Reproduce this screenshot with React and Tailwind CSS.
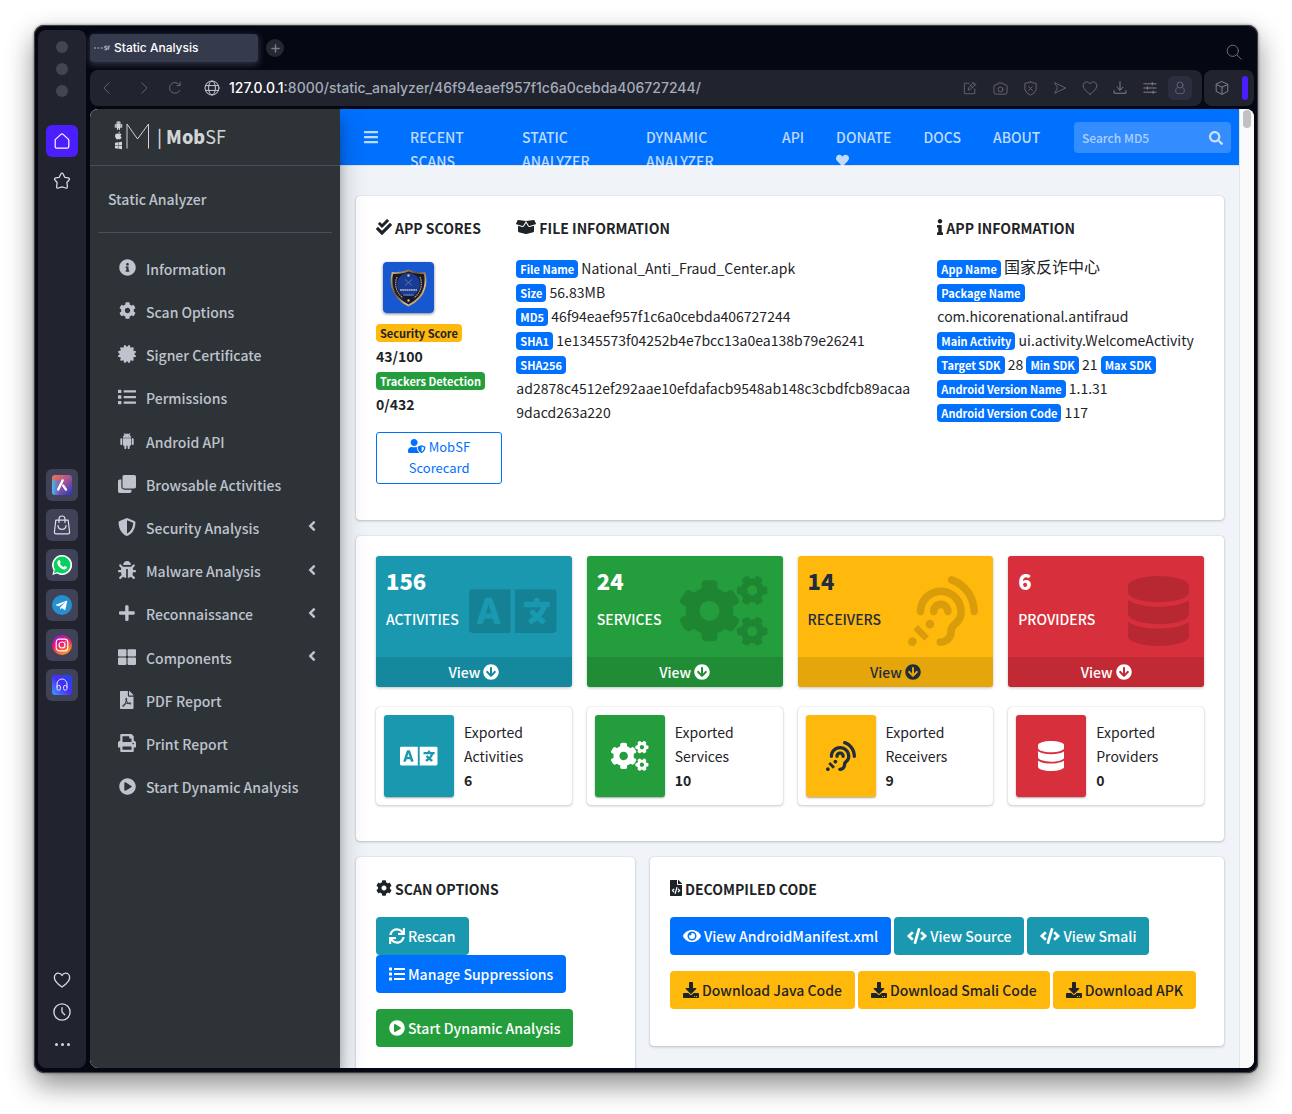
import React from "react";
import { IconContext } from "react-icons";
import {
  FaAngleLeft, FaApple, FaArrowCircleDown, FaAssistiveListeningSystems, FaBars, FaBoxOpen, FaBug,
  FaCertificate, FaCheckDouble, FaClone, FaCode, FaCog, FaCogs, FaDatabase, FaDownload, FaEye, FaFileCode,
  FaFilePdf, FaHeart, FaInfo, FaInfoCircle, FaLanguage, FaList, FaPlayCircle, FaPlus, FaPrint, FaSearch,
  FaShieldAlt, FaSync, FaTelegramPlane, FaThLarge, FaUserShield, FaWindows,
} from "react-icons/fa";

const BODY = "font-['Noto_Sans_CJK_SC','Source_Sans_Pro',sans-serif]";
const UI = "font-[Inter,sans-serif]";

function Android({ className }) {
  return (
    <svg viewBox="0 0 24 24" fill="currentColor" className={className} aria-hidden="true">
      <path d="M6 18c0 .55.45 1 1 1h1v3.5c0 .83.67 1.5 1.5 1.5s1.5-.67 1.5-1.5V19h2v3.5c0 .83.67 1.5 1.5 1.5s1.5-.67 1.5-1.5V19h1c.55 0 1-.45 1-1V8H6v10zM3.5 8C2.67 8 2 8.67 2 9.5v7c0 .83.67 1.5 1.5 1.5S5 17.33 5 16.5v-7C5 8.67 4.33 8 3.5 8zm17 0c-.83 0-1.5.67-1.5 1.5v7c0 .83.67 1.5 1.5 1.5s1.5-.67 1.5-1.5v-7c0-.83-.67-1.5-1.5-1.5zm-4.97-5.84l1.3-1.3c.2-.2.2-.51 0-.71-.2-.2-.51-.2-.71 0l-1.48 1.48C13.85 1.23 12.95 1 12 1c-.96 0-1.86.23-2.66.63L7.85.15c-.2-.2-.51-.2-.71 0-.2.2-.2.51 0 .71l1.31 1.31C6.97 3.26 6 5.01 6 7h12c0-1.99-.97-3.75-2.47-4.84zM10 5H9V4h1v1zm5 0h-1V4h1v1z" />
    </svg>
  );
}

const menu = [
  { label: "Information", icon: FaInfoCircle, size: "h-[17px]" },
  { label: "Scan Options", icon: FaCog, size: "h-[17px]" },
  { label: "Signer Certificate", icon: FaCertificate, size: "h-[18px]" },
  { label: "Permissions", icon: FaList, size: "h-[18px]" },
  { label: "Android API", icon: Android, size: "h-4" },
  { label: "Browsable Activities", icon: FaClone, size: "h-[18px]" },
  { label: "Security Analysis", icon: FaShieldAlt, size: "h-[18px]", more: true },
  { label: "Malware Analysis", icon: FaBug, size: "h-[18px]", more: true },
  { label: "Reconnaissance", icon: FaPlus, size: "h-[18px]", more: true },
  { label: "Components", icon: FaThLarge, size: "h-[18px]", more: true },
  { label: "PDF Report", icon: FaFilePdf, size: "h-[18px]" },
  { label: "Print Report", icon: FaPrint, size: "h-[18px]" },
  { label: "Start Dynamic Analysis", icon: FaPlayCircle, size: "h-[17px]" },
];

const stats = [
  { n: "156", label: "ACTIVITIES", name: "Activities", exported: "6", icon: FaLanguage, tone: "bg-[#1998b0] text-white" },
  { n: "24", label: "SERVICES", name: "Services", exported: "10", icon: FaCogs, tone: "bg-[#249d3d] text-white" },
  { n: "14", label: "RECEIVERS", name: "Receivers", exported: "9", icon: FaAssistiveListeningSystems, tone: "bg-[#ffb90d] text-[#1f2d3d]" },
  { n: "6", label: "PROVIDERS", name: "Providers", exported: "0", icon: FaDatabase, tone: "bg-[#d72f3b] text-white" },
];

function Line({ children, className = "size-4", vb = "0 0 16 16", w = 1 }) {
  return (
    <svg viewBox={vb} className={className} fill="none" stroke="currentColor" strokeWidth={w} strokeLinecap="round" strokeLinejoin="round" aria-hidden="true">
      {children}
    </svg>
  );
}

const HEART = "M8 14.2C6.9 13.4 1.2 9.6 1.2 5.7 1.2 3.5 2.8 1.9 4.7 1.9 6.2 1.9 7.4 2.7 8 4 8.6 2.7 9.8 1.9 11.3 1.9 13.2 1.9 14.8 3.5 14.8 5.7 14.8 9.6 9.1 13.4 8 14.2Z";

function BrowserRail() {
  const tile = "flex size-8 items-center justify-center rounded-md bg-[#404357] text-[#dcdee8]";
  return (
    <nav aria-label="Browser sidebar" className="flex w-12 shrink-0 flex-col items-center rounded-lg bg-[#21232f] pt-[11px] pb-[15px] text-[#d5d7e2]">
      <div className="flex flex-col gap-[10px]">
        <span className="size-3 rounded-full bg-[#44464f]" />
        <span className="size-3 rounded-full bg-[#44464f]" />
        <span className="size-3 rounded-full bg-[#44464f]" />
      </div>
      <button aria-label="Home" className="mt-7 flex size-8 items-center justify-center rounded-md bg-[#4a1eff] text-white">
        <Line w={1.2}><path d="M1.2 6.6 6.9 1.4Q8 .5 9.1 1.4L14.8 6.6V13.4Q14.8 15.2 13 15.2H3Q1.2 15.2 1.2 13.4Z" /></Line>
      </button>
      <button aria-label="Pinboards" className="mt-[15px]">
        <Line vb="0 0 18 18" className="size-[18px]" w={1.3}>
          <path d="M9 1.2Q9.8 1.2 10.3 2.2L11.7 5.3 15.2 5.9Q17.3 6.4 16 8L13.9 10.5 14.4 14.7Q14.4 16.6 12.6 16L9 14.8 5.4 16Q3.6 16.6 3.6 14.7L4.1 10.5 2 8Q.7 6.4 2.8 5.9L6.3 5.3 7.7 2.2Q8.2 1.2 9 1.2Z" />
        </Line>
      </button>
      <div className="mt-[279px] flex flex-col gap-2">
        <button aria-label="Aria" className={tile}>
          <svg viewBox="0 0 20 20" className="size-5" aria-hidden="true">
            <defs>
              <linearGradient id="aria" x1="0" y1="0" x2="1" y2="1">
                <stop offset="0" stopColor="#f07a4a" /><stop offset=".45" stopColor="#b0578f" /><stop offset="1" stopColor="#2337c8" />
              </linearGradient>
              <linearGradient id="aria2" x1="0" y1=".5" x2=".6" y2=".5">
                <stop offset="0" stopColor="#3fc4ec" /><stop offset="1" stopColor="#4b34d8" stopOpacity="0" />
              </linearGradient>
            </defs>
            <rect width="20" height="20" rx="3" fill="url(#aria)" />
            <rect y="5" width="20" height="15" rx="3" fill="url(#aria2)" />
            <path d="M6.2 14.6 10.6 5.4M11.2 10.6 14 14.6" stroke="#fff" strokeWidth="2.4" strokeLinecap="round" />
          </svg>
        </button>
        <button aria-label="Shopping corner" className={tile}>
          <Line vb="0 0 18 20" className="h-5 w-[18px]" w={1.2}>
            <path d="M2.8 5.2H15.2L16.6 17.2Q16.6 18.8 15 18.8H3Q1.4 18.8 1.4 17.2ZM6 7.6V4Q6 1 9 1T12 4V7.6M5 10.6Q5.4 14.4 9 14.4T13 10.6" />
          </Line>
        </button>
        <button aria-label="WhatsApp" className={tile}>
          <svg viewBox="0 0 20 20" className="size-5" aria-hidden="true">
            <path d="M10 0A10 10 0 1 1 5 18.6L.3 20 1.6 15.3A10 10 0 0 1 10 0Z" fill="#fff" />
            <circle cx="10" cy="10" r="8.4" fill="#06d15f" />
            <path d="M2 18.2 3 14 6 17Z" fill="#06d15f" />
            <path d="M6.6 5.2C7.6 4.6 8 5.4 8.6 7 8.7 7.6 7.8 8.2 7.9 8.6 8.7 10.2 9.8 11.2 11.5 12 12 12.1 12.5 11 13 11 14.4 11.7 15.2 11.8 15 12.6 14.6 14.2 13 14.8 11.6 14.4 8.4 13.5 5.6 10.4 5.3 7.9 5.2 6.6 5.9 5.7 6.6 5.2Z" fill="#fff" />
          </svg>
        </button>
        <button aria-label="Telegram" className={tile}>
          <span className="flex size-5 items-center justify-center rounded-full bg-[#2490d0] text-white">
            <FaTelegramPlane className="mr-px size-[13px]" />
          </span>
        </button>
        <button aria-label="Instagram" className={tile}>
          <svg viewBox="0 0 20 20" className="size-5" fill="none" stroke="#fff" aria-hidden="true">
            <defs>
              <linearGradient id="insta" x1=".1" y1="0" x2=".6" y2="1">
                <stop offset="0" stopColor="#8a18f0" /><stop offset=".45" stopColor="#ee1271" /><stop offset="1" stopColor="#ff9a1c" />
              </linearGradient>
            </defs>
            <circle cx="10" cy="10" r="10" fill="url(#insta)" stroke="none" />
            <rect x="4.2" y="4.2" width="11.6" height="11.6" rx="3" strokeWidth="1.2" />
            <circle cx="10" cy="10" r="3" strokeWidth="1.2" />
            <circle cx="13.4" cy="6.6" r=".4" strokeWidth=".6" />
          </svg>
        </button>
        <button aria-label="Player" className={tile}>
          <svg viewBox="0 0 20 20" className="size-5" fill="none" stroke="#e7e4ff" aria-hidden="true">
            <defs>
              <linearGradient id="player" x1="0" y1="1" x2="1" y2="0">
                <stop offset="0" stopColor="#3ba0ff" /><stop offset=".5" stopColor="#4a2cf5" /><stop offset="1" stopColor="#1a48f0" />
              </linearGradient>
            </defs>
            <rect width="20" height="20" rx="3" fill="url(#player)" stroke="none" />
            <path d="M5 12.5V9A5 5 0 0 1 15 9V12.5" strokeWidth="1" />
            <rect x="5" y="10.4" width="3.4" height="4.8" rx="1.5" />
            <rect x="11.6" y="10.4" width="3.4" height="4.8" rx="1.5" />
          </svg>
        </button>
      </div>
      <div className="mt-auto flex flex-col items-center gap-[14px]">
        <button aria-label="Likes"><Line vb="0 0 16 16" className="size-[18px]" w={1.2}><path d={HEART} /></Line></button>
        <button aria-label="History"><Line className="size-[18px]" w={1.2}><circle cx="8" cy="8" r="7.2" /><path d="M8 4.2V8L10.4 10.4" /></Line></button>
        <button aria-label="More" className="flex h-[18px] items-center gap-[3px]">
          <span className="size-[3px] rounded-full bg-current" /><span className="size-[3px] rounded-full bg-current" /><span className="size-[3px] rounded-full bg-current" />
        </button>
      </div>
    </nav>
  );
}

function TabStrip() {
  return (
    <div className={`flex h-10 items-start pt-1 ${UI}`}>
      <button className="flex h-7 w-[168px] items-center gap-1 rounded bg-[#363a4d] pl-1 text-[12px] font-medium text-white shadow-[0_2px_6px_1px_rgba(54,58,77,0.8)]">
        <svg viewBox="0 0 16 6" className="h-[6px] w-4" aria-hidden="true">
          <path d="M0 3H2M3.5 3H5.5M7 3H9" stroke="#8a8c98" strokeWidth="1.4" />
          <path d="M13 1.2H10.8V3H12.6V4.8H10.4M14 5V1.2H16M14 3H15.6" stroke="#c3c5cf" strokeWidth=".9" fill="none" />
        </svg>
        Static Analysis
      </button>
      <button aria-label="New tab" className="mt-[5px] ml-2 flex size-[18px] items-center justify-center rounded-full bg-[#252732] text-[#7b7d88]">
        <Line vb="0 0 10 10" className="size-[9px]" w={1.6}><path d="M5 1V9M1 5H9" /></Line>
      </button>
      <button aria-label="Search tabs" className="mt-[10px] mr-3 ml-auto text-[#6b6d77]">
        <Line w={1}><circle cx="6.8" cy="6.8" r="5.6" /><path d="M11 11 15.2 15.2" /></Line>
      </button>
    </div>
  );
}

function AddressBar() {
  const b = "flex w-[30px] justify-center";
  return (
    <div className={`flex h-9 gap-[2px] text-[#666872] ${UI}`}>
      <div className="flex min-w-0 flex-1 items-center rounded-lg bg-[#21232f] pr-[10px]">
        <button aria-label="Back" className="ml-[10px]"><Line className="size-[14px]"><path d="M10.5 2 4.5 8 10.5 14" /></Line></button>
        <button aria-label="Forward" className="ml-[23px]"><Line className="size-[14px]"><path d="M5.5 2 11.5 8 5.5 14" /></Line></button>
        <button aria-label="Reload" className="ml-[17px]"><Line className="size-[14px]" w={1.1}><path d="M13.6 10.6A6.2 6.2 0 1 1 13.4 4.8M13.9 1.6V5.2H10.2" /></Line></button>
        <span className="ml-[22px] text-[#c9cbd3]">
          <Line className="size-4" w={1}><circle cx="8" cy="8" r="7" /><ellipse cx="8" cy="8" rx="3.4" ry="7" /><path d="M1.6 5.6H14.4M1.6 10.4H14.4" /></Line>
        </span>
        <p className="ml-[9px] min-w-0 flex-1 truncate pb-px text-[14px] font-medium text-[#a3adb8]"><span className="text-white">127.0.0.1</span>:8000/static_analyzer/46f94eaef957f1c6a0cebda406727244/</p>
        <button aria-label="Edit page" className={b}><Line className="size-[14px]"><path d="M7 2.5H1.5V14.5H13.5V9M6 10 6.6 7.4 12 2 14 4 8.6 9.4ZM8 4.4 11.6 8M11 1.4 14.8 5.2" /></Line></button>
        <button aria-label="Snapshot" className={b}><Line className="size-[15px]"><path d="M1 5.8Q1 4 2.8 4H4.4L5.4 2.2H10.6L11.6 4H13.2Q15 4 15 5.8V12.2Q15 14 13.2 14H2.8Q1 14 1 12.2Z" /><circle cx="8" cy="9" r="2.6" /></Line></button>
        <button aria-label="Blocker" className={b}><Line className="size-[15px]"><path d="M8 1Q11 2.4 14 2.4V9Q13 13 8 15.2 3 13 2 9V2.4Q5 2.4 8 1ZM6 6 10 10M10 6 6 10" /></Line></button>
        <button aria-label="Share" className={b}><Line className="size-[14px]"><path d="M2 2 14.4 8 2 14 5 8Z" /></Line></button>
        <button aria-label="Like" className={b}><Line className="size-[16px]"><path d={HEART} /></Line></button>
        <button aria-label="Downloads" className={`${b} text-[#8b8d96]`}><Line className="size-[14px]"><path d="M8 1V10.4M4.6 7.2 8 10.6 11.4 7.2M1.2 11V14H14.8V11" /></Line></button>
        <button aria-label="Settings" className={`${b} text-[#8b8d96]`}><Line className="size-[14px]"><path d="M1 3.2H15M1 8H15M1 12.8H15M10.6 1.8V4.6M5 6.6V9.4M11.6 11.4V14.2" /></Line></button>
        <button aria-label="Profile" className="ml-[3px] flex size-6 items-center justify-center rounded-md bg-[#2b2e3e]"><Line className="size-[14px]"><circle cx="8" cy="4.6" r="3.4" /><path d="M5 7.2Q3 8.4 3 11.2T5 14.4H11Q13 14 13 11.2T11 7.2" /></Line></button>
      </div>
      <div className="flex w-[50px] items-center rounded-lg bg-[#21232f] pl-[10px] text-[#7d7f89]">
        <button aria-label="Extensions"><Line className="size-4"><path d="M8 1.6 13.8 4.4V11.4L8 14.4 2.2 11.4V4.4ZM2.2 4.4 8 7.2 13.8 4.4M8 7.2V14.4" /></Line></button>
        <span className="ml-3 h-6 w-[6px] rounded-full bg-[#4a1eff]" />
      </div>
    </div>
  );
}

function Sidebar() {
  return (
    <aside className="relative z-10 w-[250px] shrink-0 rounded-l-lg bg-[#2e3337] text-[14px] text-[#bfc3ce] shadow-[0_14px_28px_rgba(0,0,0,0.25),0_10px_10px_rgba(0,0,0,0.22)]">
      <a href="#home" className="flex h-[57px] items-center border-b border-[#4a4f57] pb-[3px] pl-6 text-[#d2d4d6]">
        <span className="flex flex-col items-center gap-px">
          <Android className="size-[9px]" /><FaApple className="h-[9px] w-auto" /><FaWindows className="h-[9px] w-auto" />
        </span>
        <svg viewBox="0 0 24 26" className="ml-[2px] h-[26px] w-6" fill="none" stroke="currentColor" strokeWidth="1" aria-hidden="true"><path d="M2 25.500V1L12.500 16 23.500 1V25.500" /></svg>
        <span className="ml-2 text-[18px] leading-[30px]"><span className="font-medium">|</span> <b className="font-black">Mob</b>SF</span>
      </a>
      <div className="mx-2 flex h-[67px] items-center border-b border-[#4a5058] pl-[10px] font-medium">Static Analyzer</div>
      <nav aria-label="Report sections" className="mx-2 mt-[14px] grid h-[562px] auto-rows-fr">
        {menu.map(({ label, icon: Icon, size, more }) => (
          <a key={label} href="#section" className="flex items-center gap-[6px] px-4 font-medium">
            <span className="flex w-[26px] shrink-0 justify-center pb-[2px]"><Icon className={`${size} w-auto`} /></span>
            <span className="leading-6">{label}</span>
            {more && <FaAngleLeft className="mb-[3px] ml-auto h-4 w-auto" />}
          </a>
        ))}
      </nav>
    </aside>
  );
}

function NavBar() {
  return (
    <header className="flex h-14 items-start bg-[#0070ff] px-2 text-[14px] leading-6 font-medium text-white/75">
      <button aria-label="Toggle menu" className="w-[46px] pt-5 pl-4"><FaBars className="h-4 w-auto" /></button>
      <nav aria-label="Main" className="flex min-w-0 flex-1 pt-4">
        <a href="#recent" className="w-[112px] px-4">RECENT<br />SCANS</a>
        <a href="#static" className="w-[124px] px-4">STATIC<br />ANALYZER</a>
        <a href="#dynamic" className="w-[136px] px-4">DYNAMIC<br />ANALYZER</a>
        <a href="#api" className="px-4">API</a>
        <a href="#donate" className="px-4">DONATE<FaHeart className="mt-[5px] h-[13px] w-auto" /></a>
        <a href="#docs" className="px-4">DOCS</a>
        <a href="#about" className="px-4">ABOUT</a>
      </nav>
      <form className="mt-[13px] flex h-[31px] w-[157px] items-center rounded bg-[#338dff] px-2">
        <input aria-label="Search MD5" placeholder="Search MD5" className="w-full min-w-0 bg-transparent text-[12px] font-medium outline-none placeholder:text-white/60" />
        <button type="button" aria-label="Search"><FaSearch className="size-[14px]" /></button>
      </form>
    </header>
  );
}

function Badge({ children, tone = "bg-[#0070ff] text-white" }) {
  return <span className={`inline-block rounded px-1 py-[3px] text-[11px] leading-3 font-bold whitespace-nowrap ${tone}`}>{children}</span>;
}

function Heading({ icon: Icon, children }) {
  return (
    <h2 className="flex items-center gap-[3px] leading-6 font-bold">
      <Icon className="mb-[2px] h-4 w-auto" />
      {children}
    </h2>
  );
}

function Card({ children, className = "" }) {
  return <section className={`rounded bg-white p-5 shadow-[0_0_1px_rgba(0,0,0,0.25),0_1px_3px_rgba(0,0,0,0.2)] ${className}`}>{children}</section>;
}

function Action({ icon: Icon, tone, children }) {
  return (
    <button className={`flex h-[38px] items-center gap-[3px] rounded px-[13px] leading-6 font-medium ${tone}`}>
      <Icon className="h-4 w-auto" />
      {children}
    </button>
  );
}

function AppIcon() {
  return (
    <svg viewBox="0 0 51 51" className="ml-[7px] size-[51px] rounded-sm shadow-[0_1px_3px_rgba(0,0,0,0.5)]" role="img" aria-label="App icon">
      <defs>
        <linearGradient id="gold" x1="0" y1="0" x2="1" y2="1">
          <stop offset="0" stopColor="#d8b878" /><stop offset=".4" stopColor="#6b5030" /><stop offset=".7" stopColor="#e0c080" /><stop offset="1" stopColor="#8a6838" />
        </linearGradient>
      </defs>
      <rect width="51" height="51" rx="2" fill="#1757cf" />
      <path d="M25.500 8.500Q32 11.500 41.500 11 43.500 18 41.500 26 38.500 37 25.500 43.500 12.500 37 9.500 26 7.500 18 9.500 11 19 11.500 25.500 8.500Z" fill="#15182e" stroke="url(#gold)" strokeWidth="1.800" />
      <circle cx="25.500" cy="22.500" r="11.500" fill="#193b94" />
      <path d="M14 15Q9.500 27 20 36M37 15Q41.500 27 31 36" stroke="#b5a070" strokeWidth="1.300" strokeDasharray="1.500 .8" fill="none" />
      <path d="M22 17.500 29 23.500M29 17.500 22 23.500" stroke="#6f8bd0" strokeWidth=".7" />
      <circle cx="25.500" cy="13.500" r="1.200" fill="#dec07c" />
      <path d="M17 28H34" stroke="#b9bfd0" strokeWidth="1.600" strokeDasharray="1.800 .4" />
      <path d="M20 33H31" stroke="#8fa0c8" strokeWidth=".8" />
      <circle cx="25.500" cy="38.500" r="1.200" fill="#dec07c" />
    </svg>
  );
}

function Overview() {
  return (
    <Card className="min-h-[324px]">
      <div className="-mx-[7px] grid grid-cols-12 leading-6">
        <div className="col-span-2 px-[7px]">
          <Heading icon={FaCheckDouble}>APP SCORES</Heading>
          <div className="mt-[22px] mb-[7px]"><AppIcon /></div>
          <div><Badge tone="bg-[#ffb90d] text-[#1e2327]">Security Score</Badge></div>
          <div className="font-bold">43/100</div>
          <div><Badge tone="bg-[#249d3d] text-white">Trackers Detection</Badge></div>
          <div className="font-bold">0/432</div>
          <button className="mt-4 w-full rounded-[3px] border border-[#0070ff] px-2 pt-[3px] pb-[5px] text-[13px] leading-[21px] text-[#0070ff]">
            <FaUserShield className="inline h-[14px] w-auto align-[-1px]" /> MobSF Scorecard
          </button>
        </div>
        <div className="col-span-6 px-[7px]">
          <Heading icon={FaBoxOpen}>FILE INFORMATION</Heading>
          <div className="mt-4 wrap-anywhere">
            <p><Badge>File Name</Badge> National_Anti_Fraud_Center.apk</p>
            <p><Badge>Size</Badge> 56.83MB</p>
            <p><Badge>MD5</Badge> 46f94eaef957f1c6a0cebda406727244</p>
            <p><Badge>SHA1</Badge> 1e1345573f04252b4e7bcc13a0ea138b79e26241</p>
            <p><Badge>SHA256</Badge></p>
            <p>ad2878c4512ef292aae10efdafacb9548ab148c3cbdfcb89acaa<wbr />9dacd263a220</p>
          </div>
        </div>
        <div className="col-span-4 px-[7px]">
          <Heading icon={FaInfo}>APP INFORMATION</Heading>
          <div className="mt-4">
            <p className="h-6"><Badge>App Name</Badge> <span className="align-[1px] text-[16px] leading-none">国家反诈中心</span></p>
            <p><Badge>Package Name</Badge></p>
            <p>com.hicorenational.antifraud</p>
            <p><Badge>Main Activity</Badge> ui.activity.WelcomeActivity</p>
            <p><Badge>Target SDK</Badge> 28 <Badge>Min SDK</Badge> 21 <Badge>Max SDK</Badge></p>
            <p><Badge>Android Version Name</Badge> 1.1.31</p>
            <p><Badge>Android Version Code</Badge> 117</p>
          </div>
        </div>
      </div>
    </Card>
  );
}

function Stats() {
  return (
    <Card className="pb-9">
      <div className="grid grid-cols-4 gap-x-[15px] gap-y-5">
        {stats.map(({ n, label, icon: Icon, tone }) => (
          <div key={label} className={`relative flex h-[131px] flex-col rounded-[3px] shadow-[0_1px_3px_rgba(0,0,0,0.25)] ${tone}`}>
            <div className="flex-1 p-[10px]">
              <div className="text-[22px] leading-7 font-black">{n}</div>
              <div className="mt-[13px] leading-6 font-medium">{label}</div>
            </div>
            <Icon className="absolute top-5 right-[15px] h-[70px] w-auto text-black/15" />
            <a href="#view" className="flex h-[30px] items-center justify-center gap-[3px] rounded-b-[3px] bg-black/10 font-medium">
              View <FaArrowCircleDown className="h-4 w-auto" />
            </a>
          </div>
        ))}
        {stats.map(({ name, exported, icon: Icon, tone }) => (
          <div key={name} className="flex h-[98px] gap-[10px] rounded bg-white p-2 shadow-[0_0_1px_rgba(0,0,0,0.25),0_1px_3px_rgba(0,0,0,0.2)]">
            <div className={`flex w-[70px] shrink-0 items-center justify-center rounded-[3px] shadow-[0_1px_2px_rgba(0,0,0,0.35)] ${tone}`}>
              <Icon className="h-[30px] w-auto" />
            </div>
            <div className="flex flex-col justify-center leading-6">
              <span>Exported</span><span>{name}</span><b>{exported}</b>
            </div>
          </div>
        ))}
      </div>
    </Card>
  );
}

export default function App() {
  const teal = "bg-[#1998b0] text-white";
  const blue = "bg-[#0070ff] text-white";
  const green = "bg-[#249d3d] text-white";
  const yellow = "bg-[#ffb90d] text-[#1e2327]";
  return (
    <IconContext.Provider value={{ size: "100%" }}>
      <div className="flex h-screen bg-white px-[34px] pt-[25px] pb-[41px]">
        <div className="flex min-w-0 flex-1 gap-1 rounded-[10px] bg-[#050812] p-1 pb-[5px] shadow-[0_12px_28px_rgba(0,0,0,0.45),0_0_3px_rgba(0,0,0,0.5)] ring-1 ring-[#3c3e42] ring-inset">
          <div className="mt-px flex min-w-0 flex-1 gap-1">
            <BrowserRail />
            <div className="flex min-w-0 flex-1 flex-col">
              <TabStrip />
              <AddressBar />
              <div className={`mt-[3px] flex min-h-0 flex-1 overflow-hidden rounded-lg bg-[#f0f4f8] text-[14px] text-[#1e2327] ${BODY}`}>
                <Sidebar />
                <div className="min-w-0 flex-1">
                  <NavBar />
                  <main className="flex flex-col gap-4 border-t border-[#dee2e6] pt-[30px] pr-[15px] pl-4">
                    <Overview />
                    <Stats />
                    <div className="flex items-start gap-[15px]">
                      <Card className="h-[240px] w-[279px]">
                        <Heading icon={FaCog}>SCAN OPTIONS</Heading>
                        <div className="mt-4 flex flex-col items-start">
                          <Action icon={FaSync} tone={teal}>Rescan</Action>
                          <Action icon={FaList} tone={blue}>Manage Suppressions</Action>
                          <div className="mt-4"><Action icon={FaPlayCircle} tone={green}>Start Dynamic Analysis</Action></div>
                        </div>
                      </Card>
                      <Card className="min-h-[189px] min-w-0 flex-1">
                        <Heading icon={FaFileCode}>DECOMPILED CODE</Heading>
                        <div className="mt-4 flex gap-[3px]">
                          <Action icon={FaEye} tone={blue}>View AndroidManifest.xml</Action>
                          <Action icon={FaCode} tone={teal}>View Source</Action>
                          <Action icon={FaCode} tone={teal}>View Smali</Action>
                        </div>
                        <div className="mt-4 flex gap-[3px]">
                          <Action icon={FaDownload} tone={yellow}>Download Java Code</Action>
                          <Action icon={FaDownload} tone={yellow}>Download Smali Code</Action>
                          <Action icon={FaDownload} tone={yellow}>Download APK</Action>
                        </div>
                      </Card>
                    </div>
                  </main>
                </div>
                <div className="flex w-[15px] shrink-0 justify-center border-l border-[#e4e4e4] bg-[#fafafa] pt-px">
                  <span className="h-[18px] w-2 rounded-full bg-[#c1c1c1]" />
                </div>
              </div>
            </div>
          </div>
        </div>
      </div>
    </IconContext.Provider>
  );
}
